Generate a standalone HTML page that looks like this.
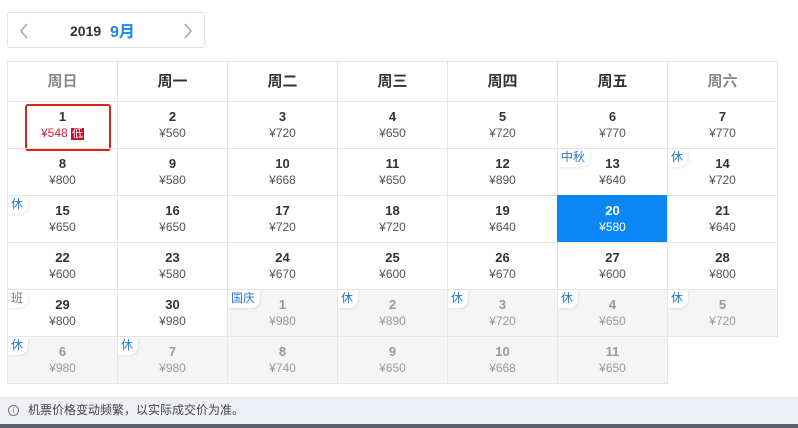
<html><head><style>
*{margin:0;padding:0;box-sizing:border-box}
body{width:798px;height:428px;background:#fff;font-family:"Liberation Sans","Noto Sans CJK SC",sans-serif;position:relative;overflow:hidden;color:#333}
.nav{position:absolute;left:7px;top:12px;width:198px;height:36px;border:1px solid #e3e3e3;border-radius:3px}
.nav .y{position:absolute;left:62px;top:10px;font-size:14px;font-weight:bold;color:#333}
.nav .m{position:absolute;left:102px;top:5px;font-size:16px;font-weight:bold;color:#1a88e8}
.c{position:absolute;width:111px;height:48px;border:1px solid #e6e6e6;text-align:center}
.h{height:41px;font-size:15px;font-weight:bold;line-height:39px;color:#333}
.h.w{color:#888}
.d{font-size:13px;font-weight:bold;margin-top:7px;line-height:16px}
.p{font-size:12px;line-height:16px;color:#555}
.g{background:#f5f5f5}
.g .d,.g .p{color:#999}
.sel{background:#0a87f5;border-color:#0a87f5}
.sel .d,.sel .p{color:#fff}
.t{position:absolute;left:0;top:0;background:#fff;color:#2a77d0;font-size:12px;line-height:15px;padding:1px 5px 2px 3px;border-radius:0 0 9px 0;box-shadow:1px 1px 2px rgba(0,0,0,.08)}
.t.b{color:#777}
.foot{position:absolute;left:0;top:397px;width:798px;height:27px;background:#eef0f5;font-size:12px;color:#444;line-height:27px;padding-left:28px}
.foot i{position:absolute;left:8px;top:8px;width:11px;height:11px;border:1px solid #777;border-radius:50%;font-style:normal;font-size:8px;line-height:9px;text-align:center;color:#777}
.bar{position:absolute;left:0;top:424px;width:798px;height:4px;background:#5a5f6b}
</style></head><body>
<div class="nav">
<svg style="position:absolute;left:10px;top:10px" width="12" height="16"><path d="M9 1L3 8l6 7" fill="none" stroke="#aaa" stroke-width="1.6"/></svg>
<span class="y">2019</span><span class="m">9月</span>
<svg style="position:absolute;left:174px;top:10px" width="12" height="16"><path d="M3 1l6 7-6 7" fill="none" stroke="#aaa" stroke-width="1.6"/></svg>
</div>
<div id="g"></div>
<div class="foot"><i>i</i>机票价格变动频繁，以实际成交价为准。</div>
<div class="bar"></div>
<script>
var H=["周日","周一","周二","周三","周四","周五","周六"],s="";
for(var i=0;i<7;i++)s+='<div class="c h'+(i==0||i==6?' w':'')+'" style="left:'+(7+i*110)+'px;top:61px">'+H[i]+'</div>';
var D=[[1,548],[2,560],[3,720],[4,650],[5,720],[6,770],[7,770],[8,800],[9,580],[10,668],[11,650],[12,890],[13,640],[14,720],[15,650],[16,650],[17,720],[18,720],[19,640],[20,580],[21,640],[22,600],[23,580],[24,670],[25,600],[26,670],[27,600],[28,800],[29,800],[30,980],[1,980],[2,890],[3,720],[4,650],[5,720],[6,980],[7,980],[8,740],[9,650],[10,668],[11,650]];
var T={12:"中秋",13:"休",14:"休",28:"班",30:"国庆",31:"休",32:"休",33:"休",34:"休",35:"休",36:"休"};
for(var k=0;k<D.length;k++){var r=Math.floor(k/7),c=k%7,cl="c";if(k>=30)cl+=" g";if(k==19)cl+=" sel";
var inner='<div class="d">'+D[k][0]+'</div><div class="p">¥'+D[k][1]+'</div>';
if(k==0)inner='<div style="position:absolute;left:17px;top:2px;width:86px;height:47px;border:2px solid #e0201b;border-radius:3px"></div><div class="d">1</div><div class="p" style="color:#d0203a">¥548 <span style="background:#c8102e;color:#fff;font-size:11px;padding:0 1px">低</span></div>';
if(T[k])inner+='<div class="t'+(T[k]=="班"?" b":"")+'">'+T[k]+'</div>';
s+='<div class="'+cl+'" style="left:'+(7+c*110)+'px;top:'+(101+r*47)+'px">'+inner+'</div>';}
document.getElementById("g").innerHTML=s;
</script>
</body></html>
